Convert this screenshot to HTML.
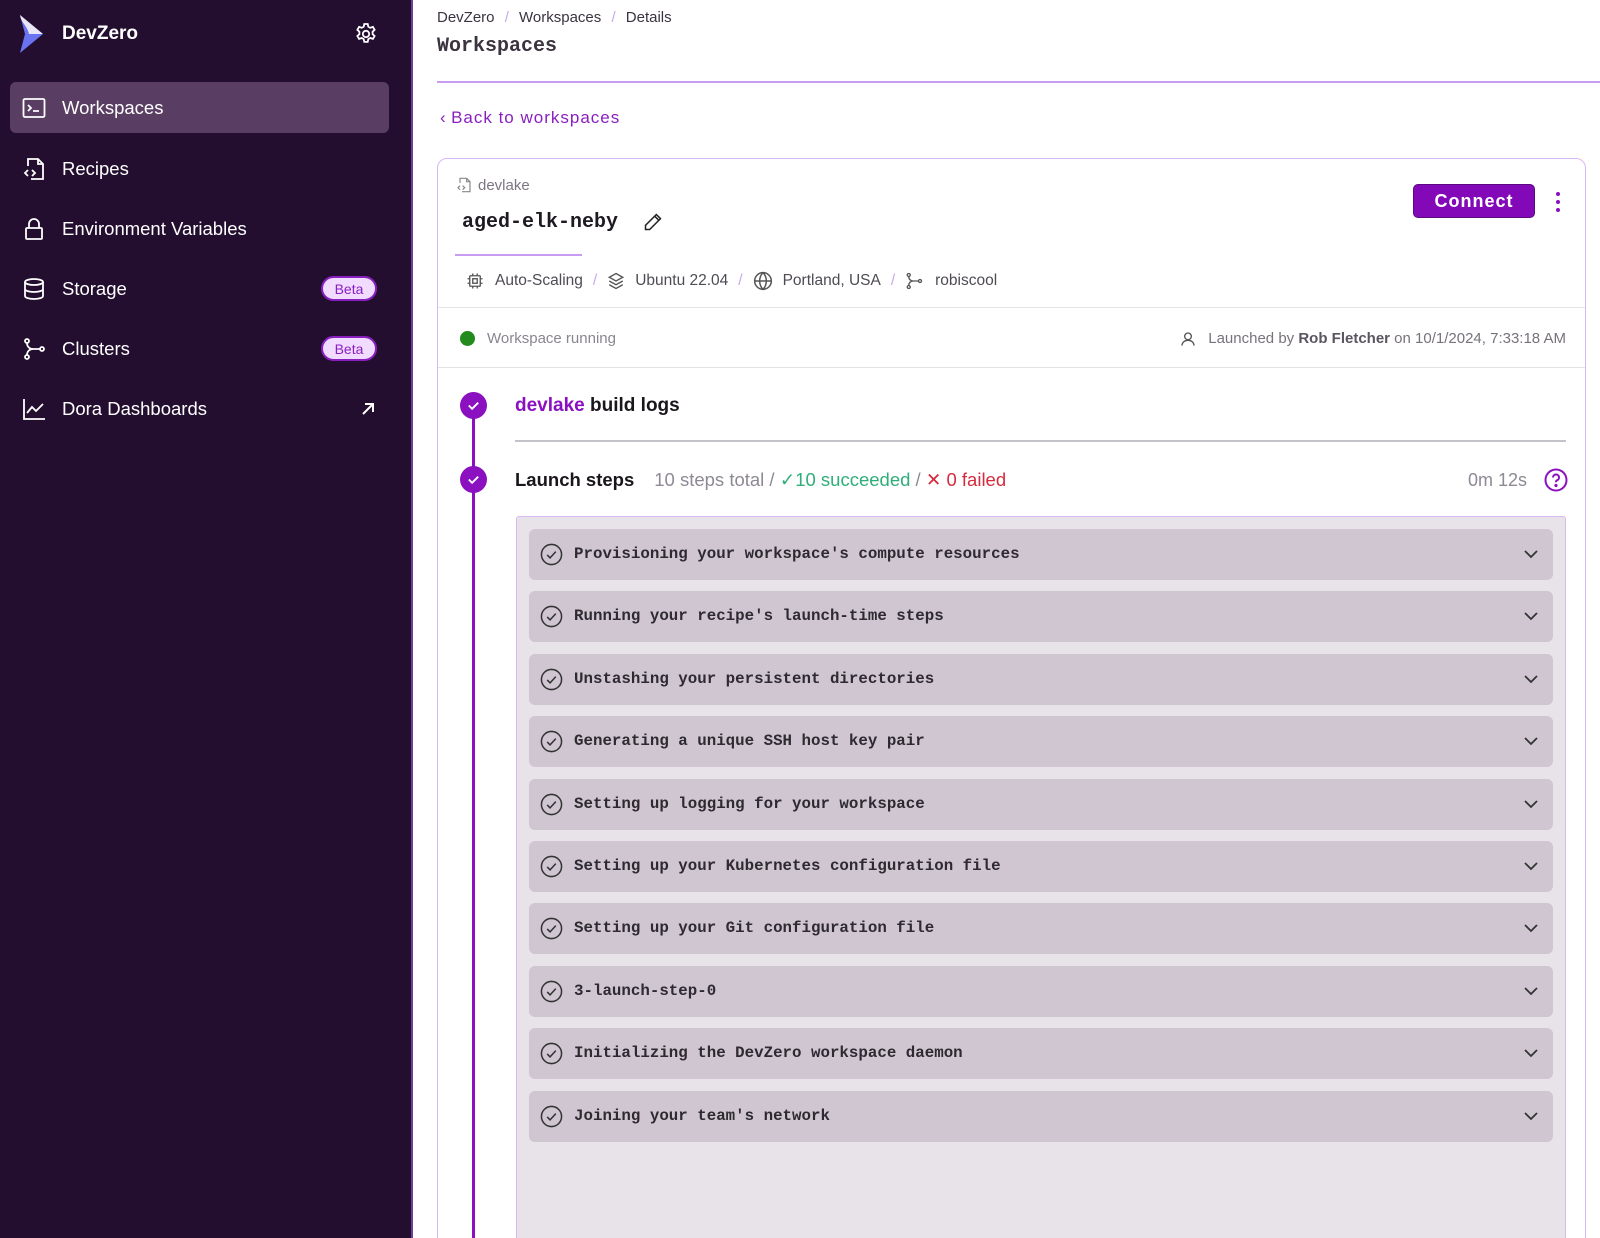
<!DOCTYPE html>
<html style="overflow:hidden;width:1600px;height:1238px"><head><meta charset="utf-8"><style>
*{box-sizing:border-box;margin:0;padding:0}
body{width:1600px;height:1238px;overflow:hidden;background:#fff;font-family:"Liberation Sans",sans-serif}
#wrap{position:relative;width:1600px;height:1238px;overflow:hidden}
.sb{position:absolute;left:0;top:0;width:413px;height:1238px;background:#230e2f;border-right:2px solid #6b3f9a}
.abs{position:absolute}
.nav{position:absolute;left:10px;width:379px;height:51px;border-radius:6px;color:#fff;font-size:18.5px;display:flex;align-items:center}
.nav svg{position:absolute;left:12px}
.nav span{position:absolute;left:52px}
.beta{position:absolute;right:12px;width:56px;height:25px;border-radius:13px;background:#f1dcff;border:2px solid #8a1fc0;color:#8a1fc0;font-size:14px;display:flex;align-items:center;justify-content:center}
.mono{font-family:"Liberation Mono",monospace;font-weight:bold}
.row{position:absolute;left:529px;width:1024px;height:51px;background:#cfc6d2;border-radius:6px}
.row .t{position:absolute;left:45px;top:16px;font-size:15.8px;color:#2e2a30;font-family:"Liberation Mono",monospace;font-weight:bold;white-space:nowrap}
.row svg.c{position:absolute;left:11px;top:14px}
.row svg.v{position:absolute;right:14px;top:19px}
.gray{color:#7d7682}
</style></head><body><div id="wrap">
<div class="sb">
  <svg class="abs" style="left:17px;top:15px" width="28" height="38" viewBox="0 0 28 38"><path d="M3 0 L26 19 L3 38 L8 19Z" fill="#6a74f0"/><path d="M3 0 L26 19 L12 19 C10 10 4 8 3 0Z" fill="#e9e6f5"/></svg>
  <div class="abs" style="left:62px;top:23px;color:#fff;font-size:19px;font-weight:bold">DevZero</div>
  <svg class="abs" style="left:354px;top:22px" width="24" height="24" viewBox="0 0 24 24" fill="none" stroke="#fff" stroke-width="1.8"><circle cx="12" cy="12" r="3.2"/><path d="M10.3 2h3.4l.6 2.7 2 1.1 2.6-.9 1.7 2.9-2 1.9v2.4l2 1.9-1.7 2.9-2.6-.9-2 1.1-.6 2.8h-3.4l-.6-2.8-2-1.1-2.6.9-1.7-2.9 2-1.9V9.7l-2-1.9 1.7-2.9 2.6.9 2-1.1z"/></svg>
  <div class="nav" style="top:82px;background:#5a3d63"><svg width="24" height="24" viewBox="0 0 24 24" fill="none" stroke="#fff" stroke-width="1.8"><rect x="1.5" y="3" width="21" height="18" rx="1.5"/><path d="M6 9l3 3-3 3M11 15h6"/></svg><span>Workspaces</span></div>
  <div class="nav" style="top:143px"><svg width="24" height="24" viewBox="0 0 24 24" fill="none" stroke="#fff" stroke-width="1.8"><path d="M6 9V2h10l5 5v15H9"/><path d="M16 2v5h5"/><path d="M6 13l-3 3 3 3M10 13l3 3-3 3"/></svg><span>Recipes</span></div>
  <div class="nav" style="top:203px"><svg width="24" height="24" viewBox="0 0 24 24" fill="none" stroke="#fff" stroke-width="1.8"><rect x="4" y="11" width="16" height="11" rx="1"/><path d="M7 11V7a5 5 0 0 1 10 0v4"/></svg><span>Environment Variables</span></div>
  <div class="nav" style="top:263px"><svg width="24" height="24" viewBox="0 0 24 24" fill="none" stroke="#fff" stroke-width="1.8"><ellipse cx="12" cy="5" rx="9" ry="3"/><path d="M3 5v14c0 1.7 4 3 9 3s9-1.3 9-3V5M3 12c0 1.7 4 3 9 3s9-1.3 9-3"/></svg><span>Storage</span><div class="beta">Beta</div></div>
  <div class="nav" style="top:323px"><svg width="24" height="24" viewBox="0 0 24 24" fill="none" stroke="#fff" stroke-width="1.8"><circle cx="5" cy="4" r="2"/><circle cx="5" cy="20" r="2"/><circle cx="20" cy="12" r="2"/><path d="M5 6c0 4 3 6 6 6h7M5 18c0-4 3-6 6-6"/></svg><span>Clusters</span><div class="beta">Beta</div></div>
  <div class="nav" style="top:383px"><svg width="24" height="24" viewBox="0 0 24 24" fill="none" stroke="#fff" stroke-width="1.8"><path d="M2 2v20h21M5 16l5-6 4 4 7-7"/></svg><span>Dora Dashboards</span><svg style="left:auto;right:14px" width="14" height="14" viewBox="0 0 14 14" fill="none" stroke="#fff" stroke-width="2"><path d="M2 12L12 2M4 2h8v8"/></svg></div>
</div>

<div class="abs" style="left:437px;top:9px;font-size:15px;color:#3b3340">DevZero <span style="color:#c9a6ee;margin:0 6px">/</span> Workspaces <span style="color:#c9a6ee;margin:0 6px">/</span> Details</div>
<div class="abs mono" style="left:437px;top:35px;font-size:20px;color:#3b3340">Workspaces</div>
<div class="abs" style="left:437px;top:81px;width:1163px;height:2px;background:#c99cf3"></div>
<div class="abs" style="left:440px;top:108px;font-size:17px;color:#8a1fc0;letter-spacing:1px">&#8249;&thinsp;Back to workspaces</div>

<div class="abs" style="left:437px;top:158px;width:1149px;height:1100px;border:1.5px solid #dab8f5;border-radius:10px"></div>
<svg class="abs" style="left:456px;top:177px" width="16" height="16" viewBox="0 0 24 24" fill="none" stroke="#888" stroke-width="1.8"><path d="M6 9V2h10l5 5v15H9"/><path d="M16 2v5h5"/><path d="M6 13l-3 3 3 3M10 13l3 3-3 3"/></svg>
<div class="abs gray" style="left:478px;top:177px;font-size:15px">devlake</div>
<div class="abs mono" style="left:462px;top:211px;font-size:20px;color:#1f1a22">aged-elk-neby</div>
<svg class="abs" style="left:643px;top:212px" width="20" height="20" viewBox="0 0 24 24" fill="none" stroke="#222" stroke-width="1.8"><path d="M16 3l5 5L8 21H3v-5z M14 5l5 5"/></svg>
<div class="abs" style="left:455px;top:254px;width:127px;height:2px;background:#c99cf3"></div>
<div class="abs" style="left:466px;top:271px;font-size:15.5px;color:#4f4a54;white-space:nowrap;display:flex;align-items:center">
<svg width="18" height="18" viewBox="0 0 24 24" fill="none" stroke="#555" stroke-width="1.8"><rect x="5" y="5" width="14" height="14" rx="1"/><rect x="9" y="9" width="6" height="6"/><path d="M9 2v3M15 2v3M9 19v3M15 19v3M2 9h3M2 15h3M19 9h3M19 15h3"/></svg>
<span style="margin-left:11px">Auto-Scaling</span><span style="color:#c9a6ee;margin:0 10px">/</span>
<svg width="18" height="18" viewBox="0 0 24 24" fill="none" stroke="#555" stroke-width="1.8"><path d="M12 2l9 5-9 5-9-5zM3 12l9 5 9-5M3 17l9 5 9-5"/></svg>
<span style="margin-left:10px">Ubuntu 22.04</span><span style="color:#c9a6ee;margin:0 10px">/</span>
<svg width="20" height="20" viewBox="0 0 24 24" fill="none" stroke="#555" stroke-width="1.8"><circle cx="12" cy="12" r="10"/><path d="M2 12h20M12 2c3 3 4 6.5 4 10s-1 7-4 10c-3-3-4-6.5-4-10s1-7 4-10z"/></svg>
<span style="margin-left:10px">Portland, USA</span><span style="color:#c9a6ee;margin:0 10px">/</span>
<svg width="18" height="18" viewBox="0 0 24 24" fill="none" stroke="#555" stroke-width="1.8"><circle cx="5" cy="4" r="2"/><circle cx="5" cy="20" r="2"/><circle cx="20" cy="12" r="2"/><path d="M5 6c0 4 3 6 6 6h7M5 18c0-4 3-6 6-6"/></svg>
<span style="margin-left:12px">robiscool</span></div>
<div class="abs" style="left:438px;top:307px;width:1147px;height:1px;background:#e4e2e6"></div>
<div class="abs" style="left:460px;top:331px;width:15px;height:15px;border-radius:50%;background:#238a1e"></div>
<div class="abs" style="left:487px;top:330px;font-size:15px;color:#8a8590">Workspace running</div>
<div class="abs" style="right:34px;top:330px;font-size:15px;color:#77727b;display:flex;align-items:center;white-space:nowrap"><svg width="16" height="16" viewBox="0 0 24 24" fill="none" stroke="#555" stroke-width="2" style="margin-right:12px"><circle cx="12" cy="8" r="5"/><path d="M3 22c0-5 4-8 9-8s9 3 9 8"/></svg>Launched by&nbsp;<b style="color:#5a5560">Rob Fletcher</b>&nbsp;on 10/1/2024, 7:33:18 AM</div>
<div class="abs" style="left:438px;top:367px;width:1147px;height:1px;background:#e4e2e6"></div>

<div class="abs" style="left:472px;top:405px;width:3px;height:840px;background:#8a10c0"></div>
<div class="abs" style="left:460px;top:392px;width:27px;height:27px;border-radius:50%;background:#8a10c0"></div>
<svg class="abs" style="left:466px;top:398px" width="15" height="15" viewBox="0 0 16 16" fill="none" stroke="#fff" stroke-width="2"><path d="M3 8l3.5 3.5L13 5"/></svg>
<div class="abs" style="left:460px;top:466px;width:27px;height:27px;border-radius:50%;background:#8a10c0"></div>
<svg class="abs" style="left:466px;top:472px" width="15" height="15" viewBox="0 0 16 16" fill="none" stroke="#fff" stroke-width="2"><path d="M3 8l3.5 3.5L13 5"/></svg>
<div class="abs" style="left:515px;top:395px;font-size:19px;font-weight:bold;color:#1a161c"><span style="color:#8a10c0">devlake</span> build logs</div>
<div class="abs" style="left:515px;top:440px;width:1051px;height:1.5px;background:#c6c2c9"></div>
<div class="abs" style="left:515px;top:469px;font-size:18.5px;white-space:nowrap"><b style="color:#1a161c">Launch steps</b><span style="color:#8e8994;margin-left:20px">10 steps total / </span><span style="color:#2fae7a">&#10003;10 succeeded</span><span style="color:#8e8994"> / </span><span style="color:#d62a3d">&#10005; 0 failed</span></div>
<div class="abs" style="left:1468px;top:470px;font-size:18px;color:#8e8994">0m 12s</div>
<svg class="abs" style="left:1544px;top:468px" width="24" height="24" viewBox="0 0 24 24" fill="none" stroke="#8a10c0" stroke-width="2"><circle cx="12" cy="12" r="10.5"/><path d="M9 9.5a3 3 0 1 1 4 2.8c-.8.4-1 1-1 2"/><circle cx="12" cy="17.5" r=".6" fill="#8a10c0"/></svg>

<div class="abs" style="left:516px;top:516px;width:1050px;height:730px;background:#e8e3e8;border:1.5px solid #dab8f5;border-radius:3px"></div>

<div class="row" style="top:529px"><svg class="c" width="23" height="23" viewBox="0 0 24 24" fill="none" stroke="#333" stroke-width="1.6"><circle cx="12" cy="12" r="10.5"/><path d="M7.5 12.5l3 3 6-6.5"/></svg><div class="t">Provisioning your workspace's compute resources</div><svg class="v" width="16" height="12" viewBox="0 0 16 12" fill="none" stroke="#333" stroke-width="1.8"><path d="M2 3l6 6 6-6"/></svg></div>
<div class="row" style="top:591px"><svg class="c" width="23" height="23" viewBox="0 0 24 24" fill="none" stroke="#333" stroke-width="1.6"><circle cx="12" cy="12" r="10.5"/><path d="M7.5 12.5l3 3 6-6.5"/></svg><div class="t">Running your recipe's launch-time steps</div><svg class="v" width="16" height="12" viewBox="0 0 16 12" fill="none" stroke="#333" stroke-width="1.8"><path d="M2 3l6 6 6-6"/></svg></div>
<div class="row" style="top:654px"><svg class="c" width="23" height="23" viewBox="0 0 24 24" fill="none" stroke="#333" stroke-width="1.6"><circle cx="12" cy="12" r="10.5"/><path d="M7.5 12.5l3 3 6-6.5"/></svg><div class="t">Unstashing your persistent directories</div><svg class="v" width="16" height="12" viewBox="0 0 16 12" fill="none" stroke="#333" stroke-width="1.8"><path d="M2 3l6 6 6-6"/></svg></div>
<div class="row" style="top:716px"><svg class="c" width="23" height="23" viewBox="0 0 24 24" fill="none" stroke="#333" stroke-width="1.6"><circle cx="12" cy="12" r="10.5"/><path d="M7.5 12.5l3 3 6-6.5"/></svg><div class="t">Generating a unique SSH host key pair</div><svg class="v" width="16" height="12" viewBox="0 0 16 12" fill="none" stroke="#333" stroke-width="1.8"><path d="M2 3l6 6 6-6"/></svg></div>
<div class="row" style="top:779px"><svg class="c" width="23" height="23" viewBox="0 0 24 24" fill="none" stroke="#333" stroke-width="1.6"><circle cx="12" cy="12" r="10.5"/><path d="M7.5 12.5l3 3 6-6.5"/></svg><div class="t">Setting up logging for your workspace</div><svg class="v" width="16" height="12" viewBox="0 0 16 12" fill="none" stroke="#333" stroke-width="1.8"><path d="M2 3l6 6 6-6"/></svg></div>
<div class="row" style="top:841px"><svg class="c" width="23" height="23" viewBox="0 0 24 24" fill="none" stroke="#333" stroke-width="1.6"><circle cx="12" cy="12" r="10.5"/><path d="M7.5 12.5l3 3 6-6.5"/></svg><div class="t">Setting up your Kubernetes configuration file</div><svg class="v" width="16" height="12" viewBox="0 0 16 12" fill="none" stroke="#333" stroke-width="1.8"><path d="M2 3l6 6 6-6"/></svg></div>
<div class="row" style="top:903px"><svg class="c" width="23" height="23" viewBox="0 0 24 24" fill="none" stroke="#333" stroke-width="1.6"><circle cx="12" cy="12" r="10.5"/><path d="M7.5 12.5l3 3 6-6.5"/></svg><div class="t">Setting up your Git configuration file</div><svg class="v" width="16" height="12" viewBox="0 0 16 12" fill="none" stroke="#333" stroke-width="1.8"><path d="M2 3l6 6 6-6"/></svg></div>
<div class="row" style="top:966px"><svg class="c" width="23" height="23" viewBox="0 0 24 24" fill="none" stroke="#333" stroke-width="1.6"><circle cx="12" cy="12" r="10.5"/><path d="M7.5 12.5l3 3 6-6.5"/></svg><div class="t">3-launch-step-0</div><svg class="v" width="16" height="12" viewBox="0 0 16 12" fill="none" stroke="#333" stroke-width="1.8"><path d="M2 3l6 6 6-6"/></svg></div>
<div class="row" style="top:1028px"><svg class="c" width="23" height="23" viewBox="0 0 24 24" fill="none" stroke="#333" stroke-width="1.6"><circle cx="12" cy="12" r="10.5"/><path d="M7.5 12.5l3 3 6-6.5"/></svg><div class="t">Initializing the DevZero workspace daemon</div><svg class="v" width="16" height="12" viewBox="0 0 16 12" fill="none" stroke="#333" stroke-width="1.8"><path d="M2 3l6 6 6-6"/></svg></div>
<div class="row" style="top:1091px"><svg class="c" width="23" height="23" viewBox="0 0 24 24" fill="none" stroke="#333" stroke-width="1.6"><circle cx="12" cy="12" r="10.5"/><path d="M7.5 12.5l3 3 6-6.5"/></svg><div class="t">Joining your team's network</div><svg class="v" width="16" height="12" viewBox="0 0 16 12" fill="none" stroke="#333" stroke-width="1.8"><path d="M2 3l6 6 6-6"/></svg></div>

<div class="abs" style="left:1413px;top:184px;width:122px;height:34px;background:#8309b8;border:1px solid #5a0a80;border-radius:5px;color:#fff;font-weight:bold;font-size:18px;letter-spacing:1px;display:flex;align-items:center;justify-content:center">Connect</div>
<svg class="abs" style="left:1554px;top:191px" width="8" height="22" viewBox="0 0 8 22" fill="#8a10c0"><circle cx="4" cy="3" r="2"/><circle cx="4" cy="11" r="2"/><circle cx="4" cy="19" r="2"/></svg>
</div></body></html>
